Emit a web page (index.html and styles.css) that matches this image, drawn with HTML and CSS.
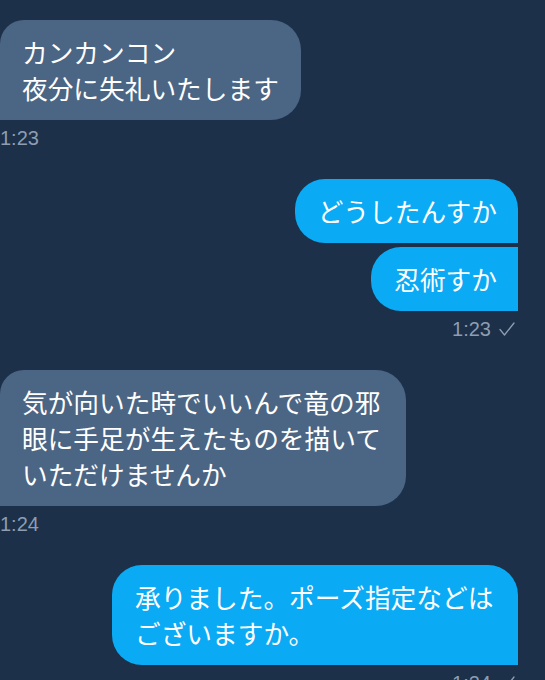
FILE: index.html
```html
<!DOCTYPE html>
<html lang="ja">
<head>
<meta charset="utf-8">
<title>DM</title>
<link rel="stylesheet" href="styles.css">
</head>
<body>
<main class="chat">
  <section class="group in">
    <div class="bubble">カンカンコン<br>夜分に失礼いたします</div>
    <div class="time">1:23</div>
  </section>
  <section class="group out">
    <div class="stack">
      <div class="bubble first">どうしたんすか</div>
      <div class="bubble last">忍術すか</div>
    </div>
    <div class="time">1:23<svg class="check" width="16" height="14" viewBox="0 0 16 14"><path d="M1 7.5 L5.5 13 L15 1" fill="none" stroke="currentColor" stroke-width="1.3" stroke-linecap="round" stroke-linejoin="round"/></svg></div>
  </section>
  <section class="group in">
    <div class="bubble">気が向いた時でいいんで竜の邪眼に手足が生えたものを描いていただけませんか</div>
    <div class="time">1:24</div>
  </section>
  <section class="group out">
    <div class="bubble first">承りました。ポーズ指定などはございますか。</div>
    <div class="time">1:24<svg class="check" width="16" height="14" viewBox="0 0 16 14"><path d="M1 7.5 L5.5 13 L15 1" fill="none" stroke="currentColor" stroke-width="1.3" stroke-linecap="round" stroke-linejoin="round"/></svg></div>
  </section>
</main>
</body>
</html>
```

FILE: styles.css
```css
html {
  overflow: hidden;
  background: #1c3049;
}

body {
  margin: 0;
  padding: 20px 27px 0 0;
  background: #1c3049;
  font-family: "Noto Sans CJK JP", "Noto Sans", sans-serif;
  color: #ffffff;
}

.chat {
  display: flex;
  flex-direction: column;
  gap: 29px;
}

.group {
  display: flex;
  flex-direction: column;
}

.group.in {
  align-items: flex-start;
}

.group.out {
  align-items: flex-end;
}

.stack {
  display: flex;
  flex-direction: column;
  align-items: flex-end;
  gap: 4px;
}

.bubble {
  box-sizing: border-box;
  max-width: 406px;
  padding: 14px 22px;
  font-size: 25.7px;
  line-height: 36px;
  font-weight: 400;
}

.in .bubble {
  background: #4b6584;
  border-radius: 24px 30px 30px 0;
}

.out .bubble {
  background: #0aaaf5;
  padding: 14px 21px 14px 23px;
}

.out .bubble.first {
  border-radius: 30px 30px 0 30px;
}

.out .bubble.last {
  border-radius: 30px 0 0 30px;
}

.time {
  display: flex;
  align-items: center;
  gap: 8px;
  margin-top: 6px;
  font-family: "Liberation Sans", Arial, sans-serif;
  font-size: 20px;
  line-height: 24px;
  color: #8d9db2;
}

.out .time {
  padding-right: 3px;
}

.check {
  display: block;
}
```
